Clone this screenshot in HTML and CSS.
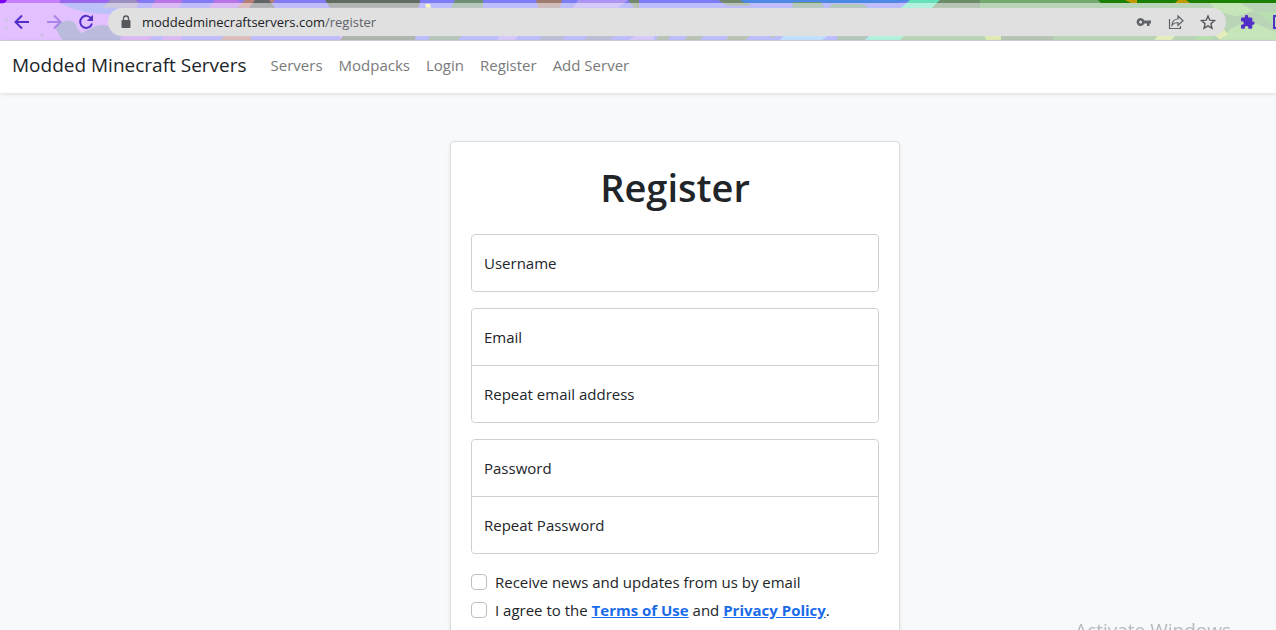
FILE: index.html
```html
<!DOCTYPE html>
<html lang="en">
<head>
    <meta charset="UTF-8">
    <meta name="viewport" content="width=device-width, initial-scale=1.0">
    <title>Register - Modded Minecraft Servers</title>
    <link rel="stylesheet" href="styles.css">
</head>
<body>
    <!-- Browser toolbar -->
    <div class="browser-bar">
        <svg class="theme-art" viewBox="0 0 1276 41" preserveAspectRatio="none" aria-hidden="true">
            <rect width="1276" height="41" fill="#c680ff"/>
            <path d="M0 0H7Q5 4 0 4z" fill="#7a00f0"/>
            <path d="M60 3Q85 16 112 14L130 3z" fill="#7a82f4"/>
            <path d="M60 0H145V3H60z" fill="#9a68ee"/>
            <path d="M110 0h25l12 8h-45z" fill="#9d90c0"/>
            <path d="M56 30q2-8 12-9 8 0 9 8l4 5 10-5q10-6 20-1l14 8v5H62z" fill="#7779ba"/>
            <circle cx="42" cy="36" r="2" fill="#a074d0"/>
            <circle cx="6" cy="20" r="2" fill="#a880d8"/>
            <circle cx="6" cy="29" r="2" fill="#a880d8"/>
            <path d="M140 0H340V41H120z" fill="#837bf4"/>
            <path d="M120 41l3-7h32l-6 7zM165 34h20l-5 7h-18z" fill="#b974e8"/>
            <path d="M155 0h28l-4 8h-28zM215 0h22l14 8h-42z" fill="#b974e8"/>
            <path d="M245 0h30l-6 8h-32zM226 34h25v7h-30z" fill="#b77d77"/>
            <path d="M255 0h14l6 8h-26z" fill="#5f6464"/>
            <path d="M325 0H425L418 8H330zM345 34h90l-8 7H340z" fill="#626b60"/>
            <path d="M420 0H980V41H415z" fill="#7e7df8"/>
            <path d="M425 4h5l1 4h-5zM446 41l2-3h3l-2 3z" fill="#f2ef85"/>
            <path d="M455 0h28v8h-32zM432 34h32l-6 7h-30z" fill="#6f8f74"/>
            <path d="M536 0h26l-2 8h-22z" fill="#a07b70"/>
            <path d="M578 0h50l-10 8h-45zM500 34h20l-5 7h-18zM640 34h14v7h-26z" fill="#ad95f3"/>
            <path d="M628 0h11v8h-5zM718 0h28l5 6h-24zM660 34h12l-4 7h-12zM690 34h16l-6 7h-16zM730 34h22l-6 7h-20z" fill="#72876c"/>
            <path d="M545 34h22l-4 7h-24zM590 34h28l-8 7h-26z" fill="#797cab"/>
            <path d="M740 0h175l-20 3H745z" fill="#4d88e5"/>
            <path d="M793 2h28l3 6h-32zM832 4h30l7 4h-40zM768 35h12l-8 4zM838 34h32l-5 7h-28z" fill="#689275"/>
            <path d="M785 35h45l-8 6h-42z" fill="#81c1fb"/>
            <path d="M910 0h30l-35 41H865z" fill="#67e1bb"/>
            <path d="M940 0H1276V41H900z" fill="#74a96f"/>
            <path d="M940 0h40v8h-48zM1003 34h50v7h-54z" fill="#6c8b68"/>
            <path d="M984 35h17v6h-15z" fill="#bed568"/>
            <path d="M1098 0H1276V3H1101z" fill="#198000"/>
            <path d="M1125 0h12v3h-6zM1178 0h8l4 3h-15z" fill="#c19b00"/>
            <path d="M1210 3h30l14 8-18 6-20-6zM1230 30l18-9 28 12v8h-54z" fill="#8dcb73"/>
            <path d="M1255 12h21v16zM1200 34h15l-4 7h-18z" fill="#70bd64"/>
            <path d="M1215 36l9-6 4 5-8 6zM1160 34h16l-4 7h-18z" fill="#c9db78"/>
        </svg>
        <div class="toolbar">
            <button class="tool-button" aria-label="Back">
                <svg width="16" height="16" viewBox="0 0 16 16"><path d="M15 8H2M8 1.500L1.500 8 8 14.500" fill="none" stroke="#5230c8" stroke-width="2"/></svg>
            </button>
            <button class="tool-button forward" aria-label="Forward">
                <svg width="16" height="16" viewBox="0 0 16 16"><path d="M1 8h13M8 1.500L14.500 8 8 14.500" fill="none" stroke="#5230c8" stroke-width="2"/></svg>
            </button>
            <button class="tool-button" aria-label="Reload">
                <svg width="16" height="16" viewBox="0 0 16 16"><path d="M13.200 4.500A6 6 0 1 0 14 9.500" fill="none" stroke="#5230c8" stroke-width="2"/><path d="M15 .8V7H8.800z" fill="#5230c8"/></svg>
            </button>
            <div class="address-bar">
                <svg width="10" height="14" viewBox="0 0 10 14"><path d="M2.500 6V3.500a2.500 2.500 0 0 1 5 0V6" fill="none" stroke="#55585c" stroke-width="1.300"/><rect x=".5" y="5" width="9" height="8" rx="1" fill="#55585c"/></svg>
                <div class="address">moddedminecraftservers.com<span>/register</span></div>
                <button class="tool-button" aria-label="Passwords">
                    <svg width="16" height="16" viewBox="0 0 16 16"><path d="M8.300 6.500a4 4 0 1 0 0 3H11V12h2.500V9.500H15v-3zM4.600 9.500a1.500 1.500 0 1 1 0-3 1.500 1.500 0 0 1 0 3z" fill="#5f6368" fill-rule="evenodd"/></svg>
                </button>
                <button class="tool-button" aria-label="Share">
                    <svg width="16" height="16" viewBox="0 0 16 16"><path d="M1.500 5v9.500h11V12M4 11c.4-4 2.500-6 6-6V2l5 4.700-5 4.600V8.500C7.500 8.500 5.500 9.200 4 11z" fill="none" stroke="#5f6368" stroke-width="1.200"/></svg>
                </button>
                <button class="tool-button" aria-label="Bookmark this page">
                    <svg width="16" height="16" viewBox="0 0 16 16"><path d="M8 2l1.800 4.200 4.700.4-3.600 3.100 1.100 4.600L8 11.900l-4 2.400 1.100-4.600-3.600-3.100 4.700-.4z" fill="none" stroke="#55585c" stroke-width="1.400"/></svg>
                </button>
            </div>
            <button class="tool-button extensions" aria-label="Extensions">
                <svg width="16" height="16" viewBox="0 0 16 16"><path d="M13.300 7.500h-1V4.700c0-.8-.6-1.300-1.300-1.300H8.200v-1a1.700 1.700 0 0 0-3.400 0v1H2.200C1.500 3.400 1 4 1 4.700v2.500h1a1.800 1.800 0 0 1 0 3.600H1v2.600c0 .7.600 1.300 1.300 1.300h2.500v-1a1.800 1.800 0 0 1 3.600 0v1H11c.7 0 1.300-.6 1.300-1.300v-2.600h1a1.700 1.700 0 0 0 0-3.300z" fill="#5230c8"/></svg>
            </button>
            <button class="tool-button side-panel" aria-label="Side panel">
                <svg width="16" height="16" viewBox="0 0 16 16"><path d="M2 2h12v12H2z" fill="none" stroke="#5230c8" stroke-width="2"/></svg>
            </button>
        </div>
    </div>

    <!-- Site navigation -->
    <nav class="navbar">
        <a class="brand" href="#">Modded Minecraft Servers</a>
        <a href="#">Servers</a>
        <a href="#">Modpacks</a>
        <a href="#">Login</a>
        <a href="#">Register</a>
        <a href="#">Add Server</a>
    </nav>

    <main>
        <form class="card">
            <h1>Register</h1>
            <div class="field-group">
                <input type="text" name="username" placeholder="Username" aria-label="Username">
            </div>
            <div class="field-group">
                <input type="email" name="email" placeholder="Email" aria-label="Email">
                <input type="email" name="email2" placeholder="Repeat email address" aria-label="Repeat email address">
            </div>
            <div class="field-group">
                <input type="password" name="password" placeholder="Password" aria-label="Password">
                <input type="password" name="password2" placeholder="Repeat Password" aria-label="Repeat Password">
            </div>
            <div class="check">
                <input type="checkbox" id="news">
                <label for="news">Receive news and updates from us by email</label>
            </div>
            <div class="check">
                <input type="checkbox" id="terms">
                <label for="terms">I agree to the <a href="#">Terms of Use</a> and <a href="#">Privacy Policy</a>.</label>
            </div>
        </form>
    </main>

    <div class="watermark">Activate Windows</div>
</body>
</html>
```
FILE: styles.css
```css
* {
    box-sizing: border-box;
}
body {
    margin: 0;
    height: 100vh;
    overflow: hidden;
    background-color: #f8f9fb;
    color: #212529;
    font-family: "Segoe UI", "Open Sans", sans-serif;
    font-size: 15px;
    line-height: 24px;
}
.browser-bar {
    position: relative;
    height: 41px;
    overflow: hidden;
    padding-top: 3px;
    border-bottom: 1px solid #d0cfdc;
}
.theme-art {
    position: absolute;
    top: 0;
    left: 0;
    width: 100%;
    height: 100%;
}
.toolbar {
    position: relative;
    display: flex;
    align-items: center;
    gap: 16px;
    height: 37px;
    padding-left: 14px;
    background-color: rgba(255, 255, 255, 0.5);
}
.tool-button {
    display: flex;
    flex: none;
    padding: 0;
    border: none;
    background: none;
    cursor: pointer;
}
.forward {
    opacity: 0.4;
}
.address-bar {
    display: flex;
    flex: 1;
    align-items: center;
    gap: 16px;
    height: 28px;
    margin-left: -2px;
    padding: 0 10px 0 13px;
    border-radius: 14px;
    background-color: #e0e0e1;
}
.address {
    flex: 1;
    margin-left: -5px;
    color: #202124;
    font-size: 13px;
}
.address span {
    color: #5f6368;
}
.extensions {
    margin-left: -2px;
}
.side-panel {
    margin-right: -12px;
}
.navbar {
    position: relative;
    display: flex;
    align-items: center;
    gap: 16px;
    height: 52px;
    padding: 0 12px 4px;
    background-color: white;
    box-shadow: 0 1px 4px rgba(0, 0, 0, 0.12);
}
.navbar a {
    color: #7a7a7a;
    text-decoration: none;
}
.navbar .brand {
    margin-right: 8px;
    color: #212529;
    font-size: 19px;
}
/* The card sits a little right of centre */
main {
    padding: 48px 0 48px 74px;
}
.card {
    width: 450px;
    max-width: 100%;
    margin: 0 auto;
    padding: 18px 20px 20px;
    border: 1px solid #dcdddf;
    border-radius: 4px;
    background-color: white;
    box-shadow: 0 2px 4px rgba(0, 0, 0, 0.08);
}
h1 {
    margin: 0 0 20px;
    font-size: 38px;
    font-weight: 600;
    line-height: 54px;
    text-align: center;
}
.field-group {
    margin-bottom: 16px;
    border: 1px solid #ced0d3;
    border-radius: 4px;
}
.field-group input {
    display: block;
    width: 100%;
    height: 56px;
    padding: 0 12px;
    border: none;
    border-radius: 4px;
    background-color: white;
    color: #212529;
    font: inherit;
}
.field-group input + input {
    height: 57px;
    border-top: 1px solid #ced0d3;
    border-radius: 0 0 4px 4px;
}
.field-group input::placeholder {
    color: #212529;
    opacity: 1;
}
.check {
    display: flex;
    align-items: center;
    gap: 8px;
    margin-bottom: 4px;
}
.check input {
    appearance: none;
    width: 16px;
    height: 16px;
    margin: 0;
    border: 1px solid #bfbfbf;
    border-radius: 4px;
    background-color: white;
}
.check input:checked {
    background-color: #0d6efd;
}
.check a {
    color: #1a6be8;
    font-weight: 700;
}
/* Desktop watermark over the page */
.watermark {
    position: fixed;
    right: 45px;
    bottom: -14px;
    color: #b9babd;
    font-size: 19px;
    line-height: 28px;
}
```
